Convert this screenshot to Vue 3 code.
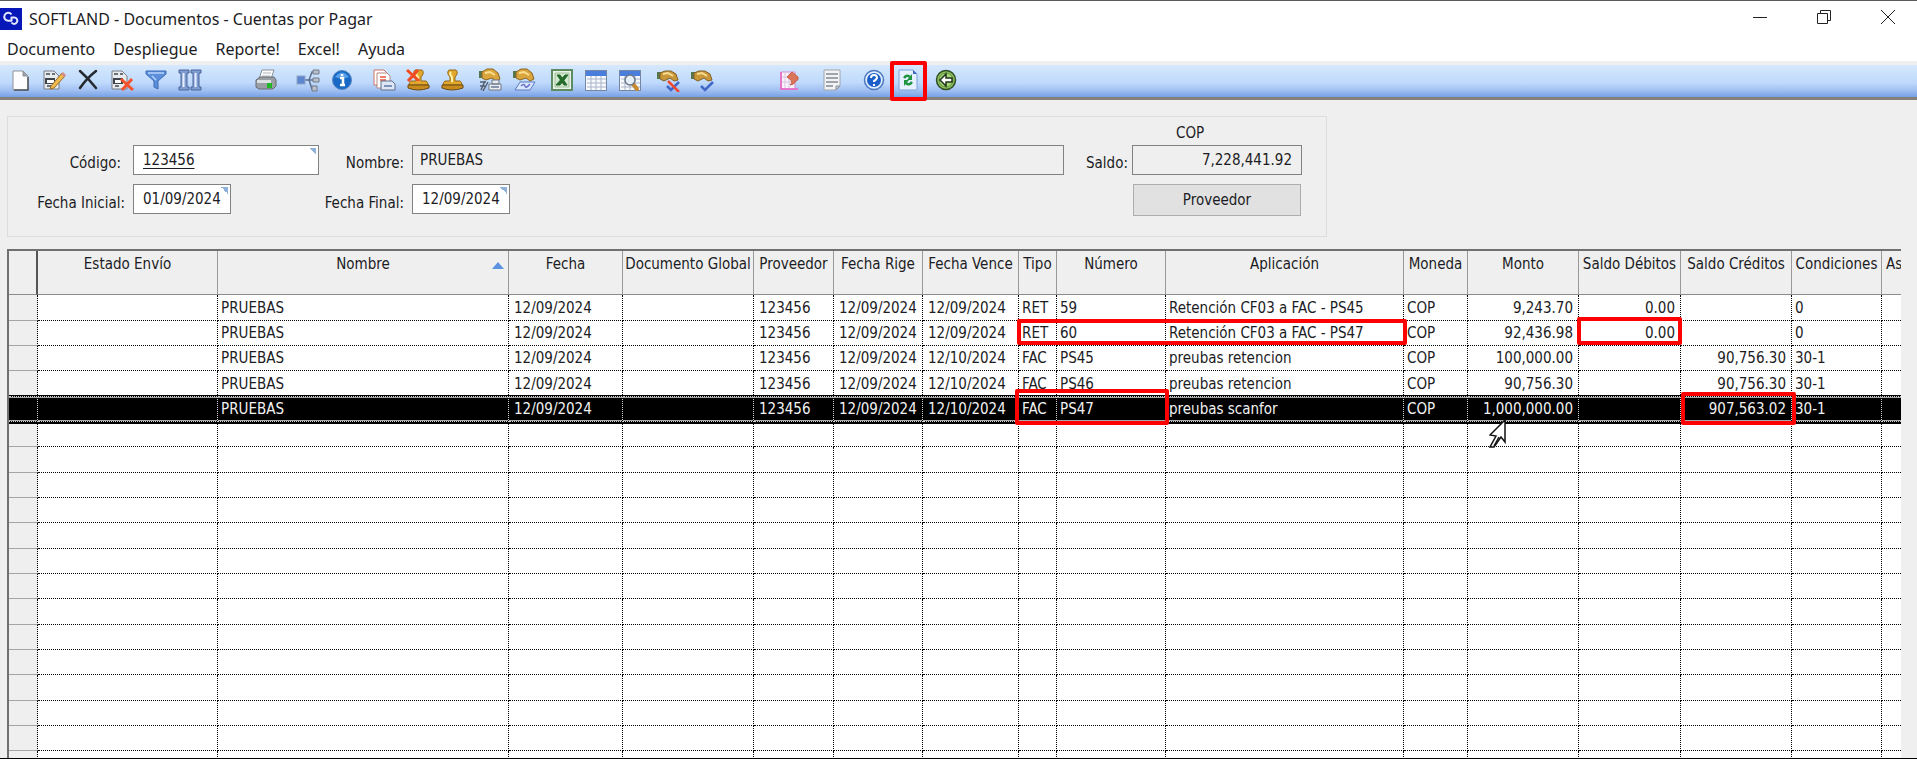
<script setup>
const menus = ['Documento', 'Despliegue', 'Reporte!', 'Excel!', 'Ayuda']

const toolGroups = [
  { gap: 'none', tools: ['new', 'edit', 'delete', 'discard', 'filter', 'columns'] },
  { gap: 'large', tools: ['print'] },
  { gap: 'small', tools: ['tree', 'info'] },
  { gap: 'small', tools: ['copies', 'unstamp', 'stamp'] },
  { gap: 'tiny', tools: ['handprint', 'handcard'] },
  { gap: 'tiny', tools: ['excel', 'grid', 'search'] },
  { gap: 'tiny', tools: ['reject', 'approve'] },
  { gap: 'wide', tools: ['chart'] },
  { gap: 'small', tools: ['notes'] },
  { gap: 'small', tools: ['help', 'refresh'] },
  { gap: 'tiny', tools: ['back'] },
]

const toolNames = {
  new: 'Nuevo', edit: 'Editar', delete: 'Eliminar', discard: 'Descartar', filter: 'Filtrar',
  columns: 'Columnas', print: 'Imprimir', tree: 'Relaciones', info: 'Información', copies: 'Copias',
  unstamp: 'Anular', stamp: 'Aplicar', handprint: 'Entregar impreso', handcard: 'Entregar',
  excel: 'Excel', grid: 'Tabla', search: 'Buscar', reject: 'Rechazar', approve: 'Aprobar',
  chart: 'Gráfico', notes: 'Notas', help: 'Ayuda', refresh: 'Refrescar', back: 'Salir',
}

const columns = [
  { key: 'envio', label: 'Estado Envío', width: 180 },
  { key: 'nombre', label: 'Nombre', width: 291, sorted: true },
  { key: 'fecha', label: 'Fecha', width: 114, kind: 'date' },
  { key: 'global', label: 'Documento Global', width: 131 },
  { key: 'prov', label: 'Proveedor', width: 80, kind: 'date' },
  { key: 'rige', label: 'Fecha Rige', width: 89, kind: 'date' },
  { key: 'vence', label: 'Fecha Vence', width: 96, kind: 'date' },
  { key: 'tipo', label: 'Tipo', width: 38 },
  { key: 'numero', label: 'Número', width: 109 },
  { key: 'aplic', label: 'Aplicación', width: 238 },
  { key: 'moneda', label: 'Moneda', width: 64 },
  { key: 'monto', label: 'Monto', width: 111, kind: 'num' },
  { key: 'deb', label: 'Saldo Débitos', width: 102, kind: 'num' },
  { key: 'cred', label: 'Saldo Créditos', width: 111, kind: 'num' },
  { key: 'cond', label: 'Condiciones', width: 90 },
  { key: 'asiento', label: 'As', kind: 'cut' },
]

const base = { nombre: 'PRUEBAS', fecha: '12/09/2024', prov: '123456', rige: '12/09/2024', moneda: 'COP' }
const documents = [
  { ...base, vence: '12/09/2024', tipo: 'RET', numero: '59', aplic: 'Retención CF03 a FAC - PS45', monto: '9,243.70', deb: '0.00', cond: '0' },
  { ...base, vence: '12/09/2024', tipo: 'RET', numero: '60', aplic: 'Retención CF03 a FAC - PS47', monto: '92,436.98', deb: '0.00', cond: '0' },
  { ...base, vence: '12/10/2024', tipo: 'FAC', numero: 'PS45', aplic: 'preubas retencion', monto: '100,000.00', cred: '90,756.30', cond: '30-1' },
  { ...base, vence: '12/10/2024', tipo: 'FAC', numero: 'PS46', aplic: 'preubas retencion', monto: '90,756.30', cred: '90,756.30', cond: '30-1' },
  { ...base, vence: '12/10/2024', tipo: 'FAC', numero: 'PS47', aplic: 'preubas scanfor', monto: '1,000,000.00', cred: '907,563.02', cond: '30-1', selected: true },
]
const rows = [...documents, ...Array.from({ length: 14 }, () => ({}))]
</script>

<template>
  <div class="window">
    <header class="titlebar">
      <svg class="logo" viewBox="0 0 22 22" aria-hidden="true">
        <rect width="22" height="22" fill="#0818b8" />
        <path d="M11.500 6.500A4 4 0 1 0 8 12.800H11.500V9.500H14.500A3.200 3.200 0 1 1 11.500 14.500" fill="none" stroke="#e4e8ff" stroke-width="2" stroke-linejoin="round" />
      </svg>
      <h1>SOFTLAND - Documentos - Cuentas por Pagar</h1>
      <div class="controls">
        <button type="button" aria-label="Minimizar"><svg viewBox="0 0 16 16"><path d="M1 8.500H15" /></svg></button>
        <button type="button" aria-label="Restaurar"><svg viewBox="0 0 16 16"><path d="M1.500 4.500H11.500V14.500H1.500ZM4.500 4.500V1.500H14.500V11.500H11.500" /></svg></button>
        <button type="button" aria-label="Cerrar"><svg viewBox="0 0 16 16"><path d="M1 1L15 15M15 1L1 15" /></svg></button>
      </div>
    </header>

    <nav class="menubar">
      <button v-for="m in menus" :key="m" type="button">{{ m }}</button>
    </nav>

    <div class="toolbar" role="toolbar">
      <div v-for="(group, i) in toolGroups" :key="i" class="group" :class="'gap-' + group.gap">
        <button v-for="t in group.tools" :key="t" type="button" class="tool" :aria-label="toolNames[t]">
          <svg viewBox="0 0 24 24" aria-hidden="true">
            <template v-if="t === 'new'">
              <path d="M5 3H15L20 8V22H5Z" fill="#fdfdff" stroke="#8d9299" />
              <path d="M15 3V8H20Z" fill="#9aa3ad" stroke="#8d9299" />
              <path d="M20 9V22H6" fill="none" stroke="#4d545c" stroke-width="1.500" />
            </template>
            <template v-else-if="t === 'edit'">
              <path d="M2 3H12L17 8V21H2Z" fill="#e8ebee" stroke="#767c84" />
              <path d="M10 6H13M5 18H9M4 6H8" stroke="#444a52" stroke-width="1.500" />
              <path d="M3 10H13V16H3Z" fill="#3f454d" />
              <rect x="5" y="12" width="7" height="3" fill="#fff" />
              <path d="M9 18L20 5L23 8L12 20L8 21Z" fill="#f0bc50" stroke="#9c6a28" />
              <path d="M19 6L21 4L24 7L22 9Z" fill="#d58b86" />
            </template>
            <template v-else-if="t === 'delete'">
              <path d="M4 3Q12 10 20 20M20 3Q11 10 4 20" fill="none" stroke="#25282e" stroke-width="2.500" stroke-linecap="round" />
            </template>
            <template v-else-if="t === 'discard'">
              <path d="M2 3H12L17 8V21H2Z" fill="#e8ebee" stroke="#767c84" />
              <path d="M10 6H13M5 18H9M4 6H8" stroke="#444a52" stroke-width="1.500" />
              <path d="M3 10H13V16H3Z" fill="#3f454d" />
              <rect x="5" y="12" width="6" height="3" fill="#fff" />
              <path d="M11 11L23 22M22 11L12 22" stroke="#f4522c" stroke-width="3" />
            </template>
            <template v-else-if="t === 'filter'">
              <path d="M2 3H22V6L14 13V21L10 19V13L2 6Z" fill="#5c8fdb" stroke="#3f6db5" />
              <path d="M4 5H20M8 8L12 12" stroke="#b5d3fa" stroke-width="1.500" />
            </template>
            <template v-else-if="t === 'columns'">
              <path d="M1 2H11V5H9V19H11V22H1V19H3V5H1ZM13 2H23V5H21V19H23V22H13V19H15V5H13Z" fill="#7f9dd0" stroke="#4a659a" />
              <path d="M5.500 5V19M17.500 5V19" stroke="#e8f0ff" stroke-width="2" />
            </template>
            <template v-else-if="t === 'print'">
              <path d="M8 2H20L17 11H5Z" fill="#fbfcfd" stroke="#8a9098" />
              <path d="M9 5H17M8 8H16" stroke="#aeb4bb" />
              <path d="M2 12L6 9H20L22 12V18L19 21H5L2 19Z" fill="#9a9fa6" stroke="#666b71" />
              <path d="M3 12H17V15H3Z" fill="#dde0e3" />
              <path d="M13 15H18V20H13Z" fill="#21b528" />
            </template>
            <template v-else-if="t === 'tree'">
              <path d="M9 12H13M19 4H16L13 12L16 21H19M13 12H18" fill="none" stroke="#5b6f90" stroke-width="1.500" />
              <rect x="1" y="8" width="8" height="8" fill="#5d86cf" stroke="#8fa4c4" />
              <path d="M17 2H23V6H17ZM17 10H23V14H17ZM16 18H21V23H16Z" fill="#b8c0cb" stroke="#727b88" />
            </template>
            <template v-else-if="t === 'info'">
              <circle cx="12" cy="12" r="9.500" fill="#1769c5" stroke="#5785bf" />
              <path d="M5 9Q12 0 19 9Q12 12 5 9" fill="#589ee8" />
              <path d="M10 10H13V17M10 17H15M12 6V8" fill="none" stroke="#fff" stroke-width="2.500" />
            </template>
            <template v-else-if="t === 'copies'">
              <path d="M2 2H12L15 5V17H2Z" fill="#fff" stroke="#cf7466" />
              <path d="M5 5H15L18 8V20H5Z" fill="#fff" stroke="#b58a80" />
              <path d="M8 9H14M8 12H14" stroke="#e6543b" stroke-width="1.500" />
              <path d="M9 13H20L23 16V22H9Z" fill="#dde7f7" stroke="#5f6e88" />
              <path d="M12 18H20" stroke="#7f93b5" stroke-width="2" />
            </template>
            <template v-else-if="t === 'stamp' || t === 'unstamp'">
              <path d="M9 2H16Q19 5 15 9V13H20Q22 14 22 17H3Q3 14 5 13H10V9Q6 5 9 2Z" fill="#e0a92d" stroke="#96691c" />
              <path d="M2 17H23V20Q12 24 2 20Z" fill="#c78a1c" stroke="#6b4a14" />
              <path d="M11 4Q9 6 12 9V14" fill="none" stroke="#fff0a8" stroke-width="2" />
              <path v-if="t === 'unstamp'" d="M1 2L13 13M12 2L2 13" stroke="#f34a22" stroke-width="3" />
            </template>
            <template v-else-if="t === 'handprint' || t === 'handcard'">
              <rect x="1" y="3" width="4" height="7" fill="#56764f" />
              <path d="M4 4L9 1H15L20 5L22 11L18 13L14 10L8 12L4 10Z" fill="#d9a53c" stroke="#8d6420" />
              <path d="M7 5L12 4L17 7" fill="none" stroke="#fbe091" stroke-width="2" />
              <template v-if="t === 'handprint'">
                <path d="M2 14H8M2 18H7M7 13L3 22M10 14L5 23" stroke="#55606f" stroke-width="1.500" />
                <path d="M14 12H21V16H14ZM11 16H23V22H11Z" fill="#e9edf2" stroke="#6c7685" />
                <path d="M13 19H21" stroke="#8796ac" stroke-width="2" />
              </template>
              <path v-else d="M8 14H23L18 22H3Z" fill="#dae8ff" stroke="#5a78bd" />
              <path v-if="t === 'handcard'" d="M9 18Q12 15 13 18T18 16" fill="none" stroke="#6a72c8" stroke-width="1.500" />
            </template>
            <template v-else-if="t === 'excel'">
              <rect x="2" y="2" width="20" height="20" fill="#e9f3e6" stroke="#5c8c60" stroke-width="2" />
              <path d="M5 5H19V19H5Z" fill="#d3e6ce" stroke="#a2c29e" />
              <path d="M7 7H10L17 17H14ZM15 7H18L10 17H6Z" fill="#256b2b" stroke="#256b2b" />
            </template>
            <template v-else-if="t === 'grid' || t === 'search'">
              <rect x="1.500" y="2.500" width="21" height="20" fill="#f6f9fd" stroke="#7787a3" />
              <path d="M2 3H22V8H2Z" fill="#4a7edc" />
              <path d="M3 11H22M3 15H22M3 19H22M7 8V22M12 8V22M17 8V22" stroke="#a9b5c8" />
              <template v-if="t === 'search'">
                <path d="M15 16L19 21" stroke="#c98a2f" stroke-width="4" stroke-linecap="round" />
                <circle cx="12" cy="12" r="5" fill="#e5f0fa" stroke="#6c7887" stroke-width="1.500" />
              </template>
            </template>
            <template v-else-if="t === 'reject' || t === 'approve'">
              <rect x="1" y="4" width="4" height="7" fill="#56764f" />
              <path d="M4 5L9 3H15L20 6L22 12L18 13L14 10L8 13L4 11Z" fill="#c9963a" stroke="#806025" />
              <path d="M7 6L12 5L17 8" fill="none" stroke="#f7dc8f" stroke-width="2" />
              <path d="M11 18L15 22L23 14" fill="none" stroke="#3f68c8" stroke-width="2.500" />
              <path v-if="t === 'reject'" d="M12 13L23 24" stroke="#f1492f" stroke-width="2.500" />
            </template>
            <template v-else-if="t === 'chart'">
              <path d="M3 4H17V21H3Z" fill="#f7f2fb" stroke="#d789cf" />
              <path d="M7 4V20M11 4V20M3 9H17M3 14H17" stroke="#d7c5df" />
              <path d="M3 4V21H20" fill="none" stroke="#ec62c1" stroke-width="1.500" />
              <path d="M14 4L20 9Q21 12 18 13Q16 17 12 17Q15 15 13 12L9 9Z" fill="#dc7458" stroke="#c4604a" />
            </template>
            <template v-else-if="t === 'notes'">
              <path d="M4 2H20V18L16 22H4Z" fill="#f2f3f5" stroke="#a0a4aa" />
              <path d="M6 6H18M6 10H18M6 14H18M6 18H13" stroke="#858a91" stroke-width="1.500" />
              <path d="M16 22V18H20Z" fill="#c7cbd0" stroke="#8a8f96" />
            </template>
            <template v-else-if="t === 'help'">
              <circle cx="12" cy="12" r="9.500" fill="#e3efff" stroke="#4c78c0" stroke-width="1.500" />
              <circle cx="12" cy="12" r="7" fill="#1d5fc8" />
              <path d="M9 10Q9 7 12 7T15 10Q14 12 12 13V14M12 16V18" fill="none" stroke="#fff" stroke-width="2" />
            </template>
            <template v-else-if="t === 'refresh'">
              <path d="M3 2H17L21 6V22H3Z" fill="#e6f0ff" stroke="#7fa3dc" />
              <path d="M17 2V6H21Z" fill="#3e69c4" />
              <path d="M8 10Q11 6 14 9M16 14Q13 18 10 15" fill="none" stroke="#1f9440" stroke-width="2.500" />
              <path d="M16 6V12H11ZM8 18V12H13Z" fill="#1f9440" />
            </template>
            <template v-else>
              <circle cx="12" cy="12" r="9.500" fill="#8fc25e" stroke="#2f4d24" stroke-width="1.500" />
              <circle cx="12" cy="12" r="7" fill="#a8d878" stroke="#5f9341" />
              <path d="M6 12L12 6V10H18V14H12V18Z" fill="#fff" stroke="#1f331a" stroke-width="1.500" />
            </template>
          </svg>
          <span v-if="t === 'refresh'" class="mark mark-tool"></span>
        </button>
      </div>
    </div>

    <main>
      <form class="panel" @submit.prevent>
        <span class="currency">COP</span>
        <label class="l1 near" for="codigo">Código:</label>
        <div class="field f1">
          <input id="codigo" class="underlined" value="123456" /><i class="corner"></i>
        </div>
        <label class="l2" for="nombre">Nombre:</label>
        <div class="field f2"><input id="nombre" class="locked" value="PRUEBAS" readonly /></div>
        <label class="l3" for="saldo">Saldo:</label>
        <div class="field f3"><input id="saldo" class="locked right" value="7,228,441.92" readonly /></div>
        <label class="l1 lower" for="inicio">Fecha Inicial:</label>
        <div class="field f1 date"><input id="inicio" value="01/09/2024" /><i class="corner"></i></div>
        <label class="l2 lower" for="fin">Fecha Final:</label>
        <div class="field f2 date"><input id="fin" value="12/09/2024" /><i class="corner"></i></div>
        <button type="button" class="action">Proveedor</button>
      </form>

      <div class="sheet">
        <table>
          <colgroup>
            <col class="stub-col" />
            <col v-for="c in columns" :key="c.key" :style="c.width ? { width: c.width + 'px' } : null" />
          </colgroup>
          <thead>
            <tr>
              <th class="stub"></th>
              <th v-for="c in columns" :key="c.key" :class="c.kind">
                {{ c.label }}
                <svg v-if="c.sorted" class="sort" viewBox="0 0 14 8" aria-hidden="true"><path d="M1 8L7 1L13 8Z" fill="#5b93e0" /></svg>
              </th>
            </tr>
          </thead>
          <tbody>
            <tr v-for="(r, i) in rows" :key="i" :class="{ selected: r.selected }">
              <td class="stub"></td>
              <td v-for="c in columns" :key="c.key" :class="c.kind">{{ r[c.key] }}</td>
            </tr>
          </tbody>
        </table>
        <span class="mark mark-ret"></span>
        <span class="mark mark-debit"></span>
        <span class="mark mark-fac"></span>
        <span class="mark mark-credit"></span>
        <svg class="cursor" viewBox="0 0 18 30" aria-hidden="true">
          <path d="M16 1V23L12 18L5 28L1 28L7 17L1 16Z" fill="#fff" stroke="#111" stroke-width="1.500" />
          <path d="M10 18L5 27" stroke="#111" stroke-width="1.500" />
        </svg>
      </div>
    </main>
  </div>
</template>

<style>
body {
  margin: 0;
  background: #efefef;
}
</style>

<style scoped>
.window {
  box-sizing: border-box;
  display: flex;
  flex-direction: column;
  height: 100vh;
  overflow: hidden;
  border-top: 1px solid #5c5a5c;
  border-bottom: 1px solid #000;
  background: #efefef;
  color: #1c1c24;
  font: 15px/20px "DejaVu Sans Condensed", "Noto Sans", sans-serif;
}
button,
input {
  box-sizing: border-box;
  margin: 0;
  font: inherit;
  color: inherit;
}
.titlebar {
  display: flex;
  align-items: center;
  height: 35px;
  background: #fff;
}
.logo {
  width: 22px;
  height: 22px;
}
h1 {
  flex: 1;
  margin: 0 0 0 7px;
  font: 400 16px/24px "Noto Sans", sans-serif;
}
.controls {
  display: flex;
  gap: 6px;
  margin-bottom: 4px;
}
.controls button {
  display: flex;
  justify-content: center;
  align-items: center;
  width: 58px;
  height: 30px;
  padding: 0;
  border: 0;
  background: none;
}
.controls svg {
  width: 16px;
  height: 16px;
  fill: none;
  stroke: #222;
}
.menubar {
  display: flex;
  gap: 18px;
  height: 25px;
  padding-left: 7px;
  background: #fff;
}
.menubar button {
  padding: 0;
  border: 0;
  background: none;
  font: 400 16px/24px "Noto Sans", sans-serif;
}
.toolbar {
  display: flex;
  align-items: center;
  height: 32px;
  padding-left: 3px;
  border-top: 4px solid #efefef;
  border-bottom: 3px solid #858079;
  background: linear-gradient(#d5e8fd 0%, #bfdafc 55%, #a3c1f2 78%, #76a1e6 100%);
}
.group {
  display: flex;
}
.gap-tiny { margin-left: 4px; }
.gap-small { margin-left: 8px; }
.gap-large { margin-left: 42px; }
.gap-wide { margin-left: 54px; }
.tool {
  position: relative;
  display: flex;
  justify-content: center;
  align-items: center;
  width: 34px;
  height: 32px;
  padding: 0 0 2px;
  border: 0;
  background: none;
}
.tool svg {
  width: 24px;
  height: 24px;
}
main {
  display: flex;
  flex: 1;
  flex-direction: column;
  gap: 12px;
  min-height: 0;
  padding: 16px 16px 0 7px;
}
.panel {
  box-sizing: border-box;
  display: grid;
  grid-template-columns: 125px 186px 93px minmax(100px, 1fr) 68px 170px;
  grid-template-rows: 28px 39px 32px;
  max-width: 1320px;
  padding: 0 24px 20px 0;
  border: 1px solid #dcdedc;
}
.panel > * {
  grid-row: 2;
}
.panel > .currency {
  grid-area: 1 / 6;
  padding: 6px 0 0 44px;
}
label {
  padding: 8px 8px 0 0;
  text-align: right;
}
.near {
  padding-right: 12px;
}
.l1 { grid-column: 1; }
.f1 { grid-column: 2; }
.l2 { grid-column: 3; }
.f2 { grid-column: 4; }
.l3 {
  grid-column: 5;
  padding-right: 4px;
}
.f3 { grid-column: 6; }
.panel > .lower,
.panel > .date,
.panel > .action {
  grid-row: 3;
}
.lower {
  padding-top: 9px;
}
.field {
  position: relative;
  height: 30px;
}
.date {
  width: 98px;
}
.field input {
  width: 100%;
  height: 30px;
  padding: 0 9px;
  border: 1px solid #828282;
  border-radius: 0;
  outline: 0;
  background: #fff;
}
.field .underlined {
  text-decoration: underline;
  text-underline-offset: 3px;
}
.field .locked {
  padding-left: 7px;
  background: #efefef;
}
.field .right {
  text-align: right;
}
.corner {
  position: absolute;
  top: 3px;
  right: 3px;
  width: 7px;
  height: 7px;
  background: linear-gradient(to top right, transparent 50%, #8fb2da 50%);
}
.action {
  grid-column: 6;
  margin: 0 1px;
  border: 1px solid #adadad;
  background: #e1e1e1;
}
.sheet {
  position: relative;
  flex: 1;
  min-height: 0;
  overflow: hidden;
  border-top: 2px solid #707070;
  border-left: 2px solid #707070;
}
table {
  width: 100%;
  table-layout: fixed;
  border-collapse: separate;
  border-spacing: 0;
}
.stub-col {
  width: 29px;
}
th,
td {
  box-sizing: border-box;
  overflow: hidden;
  white-space: nowrap;
}
th {
  position: relative;
  height: 44px;
  padding: 3px 0 0;
  border-right: 1px solid #999;
  border-bottom: 1px solid #8c8c8c;
  background: #efefef;
  font-weight: 400;
  text-align: center;
  vertical-align: top;
}
th.stub {
  border-right: 2px solid #555;
}
th.cut {
  padding-left: 4px;
  border-right: 0;
  text-align: left;
}
.sort {
  position: absolute;
  top: 10px;
  right: 3px;
  width: 14px;
  height: 8px;
}
td {
  height: 25px;
  padding: 0 6px 0 3px;
  border-right: 1px dotted #000;
  border-bottom: 1px dotted #000;
  background: #fff;
}
tr:nth-child(3n + 1) td {
  height: 26px;
}
td.date {
  padding: 0 0 0 5px;
}
td.num {
  padding-right: 5px;
  text-align: right;
}
td.cut {
  border-right: 0;
}
td.stub {
  border-bottom: 1px solid #a5a5a5;
  background: #efefef;
}
.selected td {
  position: relative;
  overflow: visible;
  border-color: #d0d0d0;
  border-bottom-style: dotted;
  background: linear-gradient(#aaa 0 1px, #000 1px calc(100% - 1px), #aaa calc(100% - 1px)) padding-box, #000;
  box-shadow: 0 2px #000, 0 -2px #000;
  color: #f2f2f2;
}
.selected td::before {
  content: "";
  position: absolute;
  top: -1px;
  right: 0;
  left: 0;
  border-top: 1px dotted #d0d0d0;
}
.mark {
  position: absolute;
  box-sizing: border-box;
  border: 4px solid #f00;
  border-radius: 2px;
}
.mark-tool {
  top: -4px;
  left: -1px;
  width: 37px;
  height: 40px;
}
.mark-ret {
  top: 68px;
  left: 1008px;
  width: 390px;
  height: 26px;
}
.mark-debit {
  top: 66px;
  left: 1568px;
  width: 105px;
  height: 28px;
}
.mark-fac {
  top: 138px;
  left: 1006px;
  width: 154px;
  height: 36px;
}
.mark-credit {
  top: 141px;
  left: 1672px;
  width: 115px;
  height: 33px;
}
.cursor {
  position: absolute;
  top: 168px;
  left: 1480px;
  width: 18px;
  height: 30px;
}
</style>
